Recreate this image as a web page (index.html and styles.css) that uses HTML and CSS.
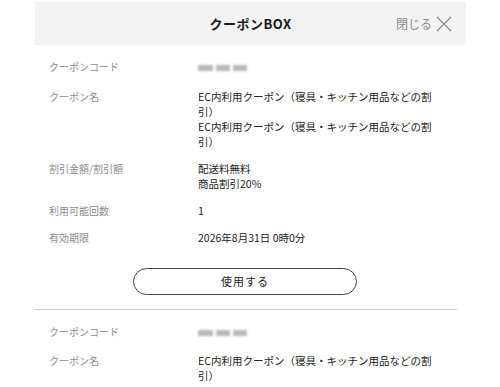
FILE: index.html
```html
<!DOCTYPE html>
<html lang="ja">
<head>
<meta charset="utf-8">
<link rel="stylesheet" href="styles.css">
</head>
<body>
<div class="header">
  <div></div>
  <div class="title">クーポンBOX</div>
  <div class="close">閉じる
    <svg class="x" width="16" height="16" viewBox="0 0 16 16"><path d="M1 1L15 15M15 1L1 15" stroke="#8a8a8a" stroke-width="1.2" fill="none"/></svg>
  </div>
</div>

<div class="coupon">
  <dl class="rows">
    <div class="row"><dt>クーポンコード</dt><dd><span class="code"><i></i><i></i><i></i></span></dd></div>
    <div class="row"><dt>クーポン名</dt><dd class="val">EC内利用クーポン（寝具・キッチン用品などの割引）<br>EC内利用クーポン（寝具・キッチン用品などの割引）</dd></div>
    <div class="row"><dt>割引金額/割引額</dt><dd class="val">配送料無料<br>商品割引20%</dd></div>
    <div class="row"><dt>利用可能回数</dt><dd class="val">1</dd></div>
    <div class="row"><dt>有効期限</dt><dd class="val">2026年8月31日 0時0分</dd></div>
  </dl>
  <div class="actions"><button class="use">使用する</button></div>
</div>

<div class="coupon">
  <dl class="rows">
    <div class="row"><dt>クーポンコード</dt><dd><span class="code"><i></i><i></i><i></i></span></dd></div>
    <div class="row"><dt>クーポン名</dt><dd class="val">EC内利用クーポン（寝具・キッチン用品などの割引）</dd></div>
  </dl>
</div>
</body>
</html>
```
FILE: styles.css
```css
* { box-sizing: border-box; }
html, body { margin: 0; padding: 0; background: #fff; }
body {
  font-family: "Noto Sans CJK JP", "Noto Sans", sans-serif;
  color: #222;
  width: 500px;
  height: 387px;
  overflow: hidden;
}
.header {
  margin: 2px 34px 0 35px;
  height: 43px;
  background: #f3f3f3;
  display: grid;
  grid-template-columns: 1fr auto 1fr;
  align-items: center;
}
.title {
  font-size: 13px;
  font-weight: bold;
  color: #1a1a1a;
  letter-spacing: 0.5px;
}
.close {
  justify-self: end;
  padding-right: 14px;
  font-size: 12px;
  color: #8a8a8a;
  display: flex;
  align-items: center;
  gap: 4px;
}
.coupon {
  margin: 0 43px 0 35px;
  padding: 14px 0 14px 14px;
  border-bottom: 1px solid #cfcfcf;
}
.coupon:last-child { border-bottom: none; }
.rows { margin: 0; display: flex; flex-direction: column; gap: 12px; }
.row {
  display: grid;
  grid-template-columns: 149px 245px;
  font-size: 10.5px;
  line-height: 15px;
}
.row:first-child { margin-bottom: 1px; }
dt { color: #8c8c8c; font-size: 10px; }
dd { margin: 0; }
.val { color: #222; }
.code { display: inline-flex; gap: 3px; align-items: center; height: 15px; filter: blur(0.8px); }
.code i { display: block; height: 6px; background: #b8b8b8; }
.code i:nth-child(1) { width: 15px; }
.code i:nth-child(2) { width: 14px; }
.code i:nth-child(3) { width: 14px; }
.actions { display: flex; justify-content: center; padding: 23px 2px 0 0; margin-left: -14px; }
.use {
  width: 224px;
  height: 27px;
  border: 1px solid #444;
  border-radius: 14px;
  background: #fff;
  font-family: inherit;
  font-size: 11px;
  color: #222;
  letter-spacing: 1px;
}
```
